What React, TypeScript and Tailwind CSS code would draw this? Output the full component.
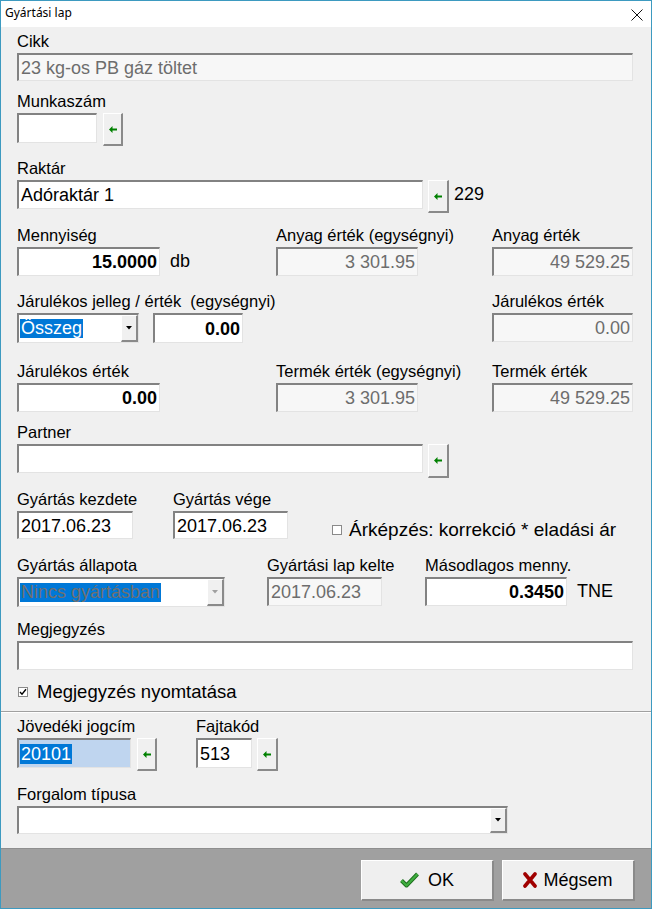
import React from "react";

const sunken =
  "border-t-2 border-l-2 border-b border-r border-t-[#828282] border-l-[#828282] border-b-[#e3e3e3] border-r-[#e3e3e3]";
const raised =
  "border-t border-l border-b-2 border-r-2 border-t-white border-l-white border-b-[#8a8a8a] border-r-[#8a8a8a]";

const Label = ({ children, pre = false }: { children: React.ReactNode; pre?: boolean }) => (
  <div className={`h-[21px] text-[16.5px] leading-[18px] text-black ${pre ? "whitespace-pre" : "whitespace-nowrap"}`}>
    {children}
  </div>
);

interface BoxProps {
  className?: string;
  value?: string;
  right?: boolean;
  bold?: boolean;
  disabled?: boolean;
}

const Box = ({ className = "", value = "", right = false, bold = false, disabled = false }: BoxProps) => (
  <div
    className={`${sunken} flex items-center px-[2px] text-[18px] leading-none whitespace-nowrap overflow-hidden ${
      right ? "justify-end" : ""
    } ${bold ? "font-bold" : ""} ${disabled ? "bg-[#f7f7f7] text-[#6d6d6d]" : "bg-white text-black"} ${className}`}
  >
    {value}
  </div>
);

const PickButton = ({ className = "" }: { className?: string }) => (
  <div className={`${raised} bg-[#f0f0f0] flex items-center justify-center shrink-0 ${className}`}>
    <svg width="8" height="7" viewBox="0 0 8 7">
      <path d="M0 3.5 L3.5 0 V2.5 H8 V4.5 H3.5 V7 Z" fill="#008000" />
    </svg>
  </div>
);

const Combo = ({ className = "", text, disabled = false }: { className?: string; text?: string; disabled?: boolean }) => (
  <div className={`${sunken} bg-white flex items-stretch ${className}`}>
    <div className="flex-1 flex items-center pl-[1px] overflow-hidden">
      {text && (
        <span
          className={`bg-[#0078d7] px-[1px] text-[18px] leading-[19px] whitespace-nowrap ${
            disabled ? "text-[#707070]" : "text-white"
          }`}
        >
          {text}
        </span>
      )}
    </div>
    <div className={`w-[17px] ${raised} bg-[#f0f0f0] flex items-center justify-center`}>
      <svg width="6" height="4" viewBox="0 0 6 4">
        <path d="M0 0 H6 L3 3.5 Z" fill={disabled ? "#a0a0a0" : "#000"} />
      </svg>
    </div>
  </div>
);

const CheckBox = ({ checked = false }: { checked?: boolean }) => (
  <div className="w-[10px] h-[10px] border border-[#8a8a8a] bg-white flex items-center justify-center shrink-0">
    {checked && (
      <svg width="8" height="8" viewBox="0 0 8 8">
        <path d="M1 4 L3 6.2 L7 1.2" stroke="#000" strokeWidth="1.4" fill="none" />
      </svg>
    )}
  </div>
);

export default function App() {
  return (
    <div className="w-[652px] h-[909px] border border-[#3d9ac0] bg-[#f0f0f0] flex flex-col font-['Liberation_Sans',Arial,sans-serif] text-black overflow-hidden">
      {/* Title bar */}
      <div className="h-[26px] bg-white flex items-start justify-between shrink-0">
        <span className="pl-[4px] pt-[5px] text-[12px] leading-[14px] font-['Noto_Sans',sans-serif]">Gyártási lap</span>
        <svg className="mt-[8px] mr-[8px]" width="12" height="12" viewBox="0 0 12 12">
          <path d="M0.5 0.5 L11.5 11.5 M11.5 0.5 L0.5 11.5" stroke="#111" strokeWidth="1" />
        </svg>
      </div>

      {/* Body */}
      <div className="flex-1 px-[16px] flex flex-col">
        <div className="mt-[5px]">
          <Label>Cikk</Label>
          <Box className="w-[616px] h-[28px]" value="23 kg-os PB gáz töltet" disabled />
        </div>

        <div className="mt-[11px]">
          <Label>Munkaszám</Label>
          <div className="flex items-start">
            <Box className="w-[80px] h-[30px]" />
            <PickButton className="ml-[6px] w-[20px] h-[33px]" />
          </div>
        </div>

        <div className="mt-[13px]">
          <Label>Raktár</Label>
          <div className="flex items-start">
            <Box className="w-[406px] h-[29px]" value="Adóraktár 1" />
            <PickButton className="ml-[5px] w-[21px] h-[33px]" />
            <span className="ml-[5px] text-[18px] leading-[29px]">229</span>
          </div>
        </div>

        <div className="mt-[13px] flex">
          <div className="w-[259px]">
            <Label>Mennyiség</Label>
            <div className="flex items-center">
              <Box className="w-[143px] h-[29px]" value="15.0000" right bold />
              <span className="ml-[10px] text-[18px]">db</span>
            </div>
          </div>
          <div className="w-[216px]">
            <Label>Anyag érték (egységnyi)</Label>
            <Box className="w-[142px] h-[29px]" value="3 301.95" right disabled />
          </div>
          <div>
            <Label>Anyag érték</Label>
            <Box className="w-[141px] h-[29px]" value="49 529.25" right disabled />
          </div>
        </div>

        <div className="mt-[16px] flex">
          <div className="w-[475px]">
            <Label pre>Járulékos jelleg / érték  (egységnyi)</Label>
            <div className="flex items-start">
              <Combo className="w-[122px] h-[30px]" text="Összeg" />
              <Box className="ml-[14px] w-[90px] h-[30px]" value="0.00" right bold />
            </div>
          </div>
          <div>
            <Label>Járulékos érték</Label>
            <Box className="w-[141px] h-[29px]" value="0.00" right disabled />
          </div>
        </div>

        <div className="mt-[19px] flex">
          <div className="w-[259px]">
            <Label>Járulékos érték</Label>
            <Box className="w-[143px] h-[29px]" value="0.00" right bold />
          </div>
          <div className="w-[216px]">
            <Label>Termék érték (egységnyi)</Label>
            <Box className="w-[142px] h-[29px]" value="3 301.95" right disabled />
          </div>
          <div>
            <Label>Termék érték</Label>
            <Box className="w-[141px] h-[29px]" value="49 529.25" right disabled />
          </div>
        </div>

        <div className="mt-[11px]">
          <Label>Partner</Label>
          <div className="flex items-start">
            <Box className="w-[406px] h-[29px]" />
            <PickButton className="ml-[5px] w-[21px] h-[34px]" />
          </div>
        </div>

        <div className="mt-[12px] flex items-end">
          <div className="w-[156px]">
            <Label>Gyártás kezdete</Label>
            <Box className="w-[116px] h-[28px]" value="2017.06.23" />
          </div>
          <div>
            <Label>Gyártás vége</Label>
            <Box className="w-[115px] h-[28px]" value="2017.06.23" />
          </div>
          <div className="ml-[44px] h-[18px] flex items-center">
            <CheckBox />
            <span className="ml-[7px] text-[19px] leading-[18px] whitespace-nowrap">Árképzés: korrekció * eladási ár</span>
          </div>
        </div>

        <div className="mt-[17px] flex">
          <div className="w-[250px]">
            <Label>Gyártás állapota</Label>
            <Combo className="w-[208px] h-[30px]" text="Nincs gyártásban" disabled />
          </div>
          <div className="w-[158px]">
            <Label>Gyártási lap kelte</Label>
            <Box className="w-[115px] h-[29px]" value="2017.06.23" disabled />
          </div>
          <div>
            <Label>Másodlagos menny.</Label>
            <div className="flex items-center">
              <Box className="w-[142px] h-[29px]" value="0.3450" right bold />
              <span className="ml-[10px] text-[18px]">TNE</span>
            </div>
          </div>
        </div>

        <div className="mt-[13px]">
          <Label>Megjegyzés</Label>
          <Box className="w-[616px] h-[29px]" />
        </div>

        <div className="mt-[11px] h-[22px] flex items-center pl-[1px]">
          <CheckBox checked />
          <span className="ml-[9px] text-[18.5px] leading-[22px] whitespace-nowrap">Megjegyzés nyomtatása</span>
        </div>

        <div className="-mx-[16px] mt-[8px] border-t border-t-[#a0a0a0] border-b border-b-white" />

        <div className="mt-[4px] flex">
          <div className="w-[179px]">
            <Label>Jövedéki jogcím</Label>
            <div className="flex items-start">
              <div className={`${sunken} w-[114px] h-[30px] bg-[#bfd5ef] flex items-center pl-[1px]`}>
                <span className="bg-[#0078d7] text-white text-[18px] leading-[20px] px-[1px]">20101</span>
              </div>
              <PickButton className="ml-[6px] w-[20px] h-[33px]" />
            </div>
          </div>
          <div>
            <Label>Fajtakód</Label>
            <div className="flex items-start">
              <Box className="w-[56px] h-[30px]" value="513" />
              <PickButton className="ml-[5px] w-[21px] h-[33px]" />
            </div>
          </div>
        </div>

        <div className="mt-[14px]">
          <Label>Forgalom típusa</Label>
          <Combo className="w-[491px] h-[28px]" />
        </div>
      </div>

      {/* Button bar */}
      <div className="h-[60px] shrink-0 bg-[#a0a0a0] border-t border-t-[#8f8f8f] flex items-start justify-end pt-[11px] pr-[16px] gap-[8px]">
        <div className={`${raised} w-[133px] h-[41px] bg-[#efefef] flex items-center justify-center gap-[9px]`}>
          <svg width="19" height="16" viewBox="0 0 19 16">
            <path d="M1.5 8.5 L6.5 13.5 L17.5 2" stroke="#1d6e1d" strokeWidth="4" fill="none" strokeLinejoin="round" />
            <path d="M1.5 8.5 L6.5 13.5 L17.5 2" stroke="#3fae3f" strokeWidth="2.2" fill="none" strokeLinejoin="round" />
          </svg>
          <span className="text-[18px] leading-none">OK</span>
        </div>
        <div className={`${raised} w-[133px] h-[41px] bg-[#efefef] flex items-center justify-center gap-[6px]`}>
          <svg width="14" height="16" viewBox="0 0 14 16">
            <path d="M2 2 L12 14 M12 2 L2 14" stroke="#a00000" strokeWidth="3.6" strokeLinecap="round" />
          </svg>
          <span className="text-[18px] leading-none">Mégsem</span>
        </div>
      </div>
    </div>
  );
}
